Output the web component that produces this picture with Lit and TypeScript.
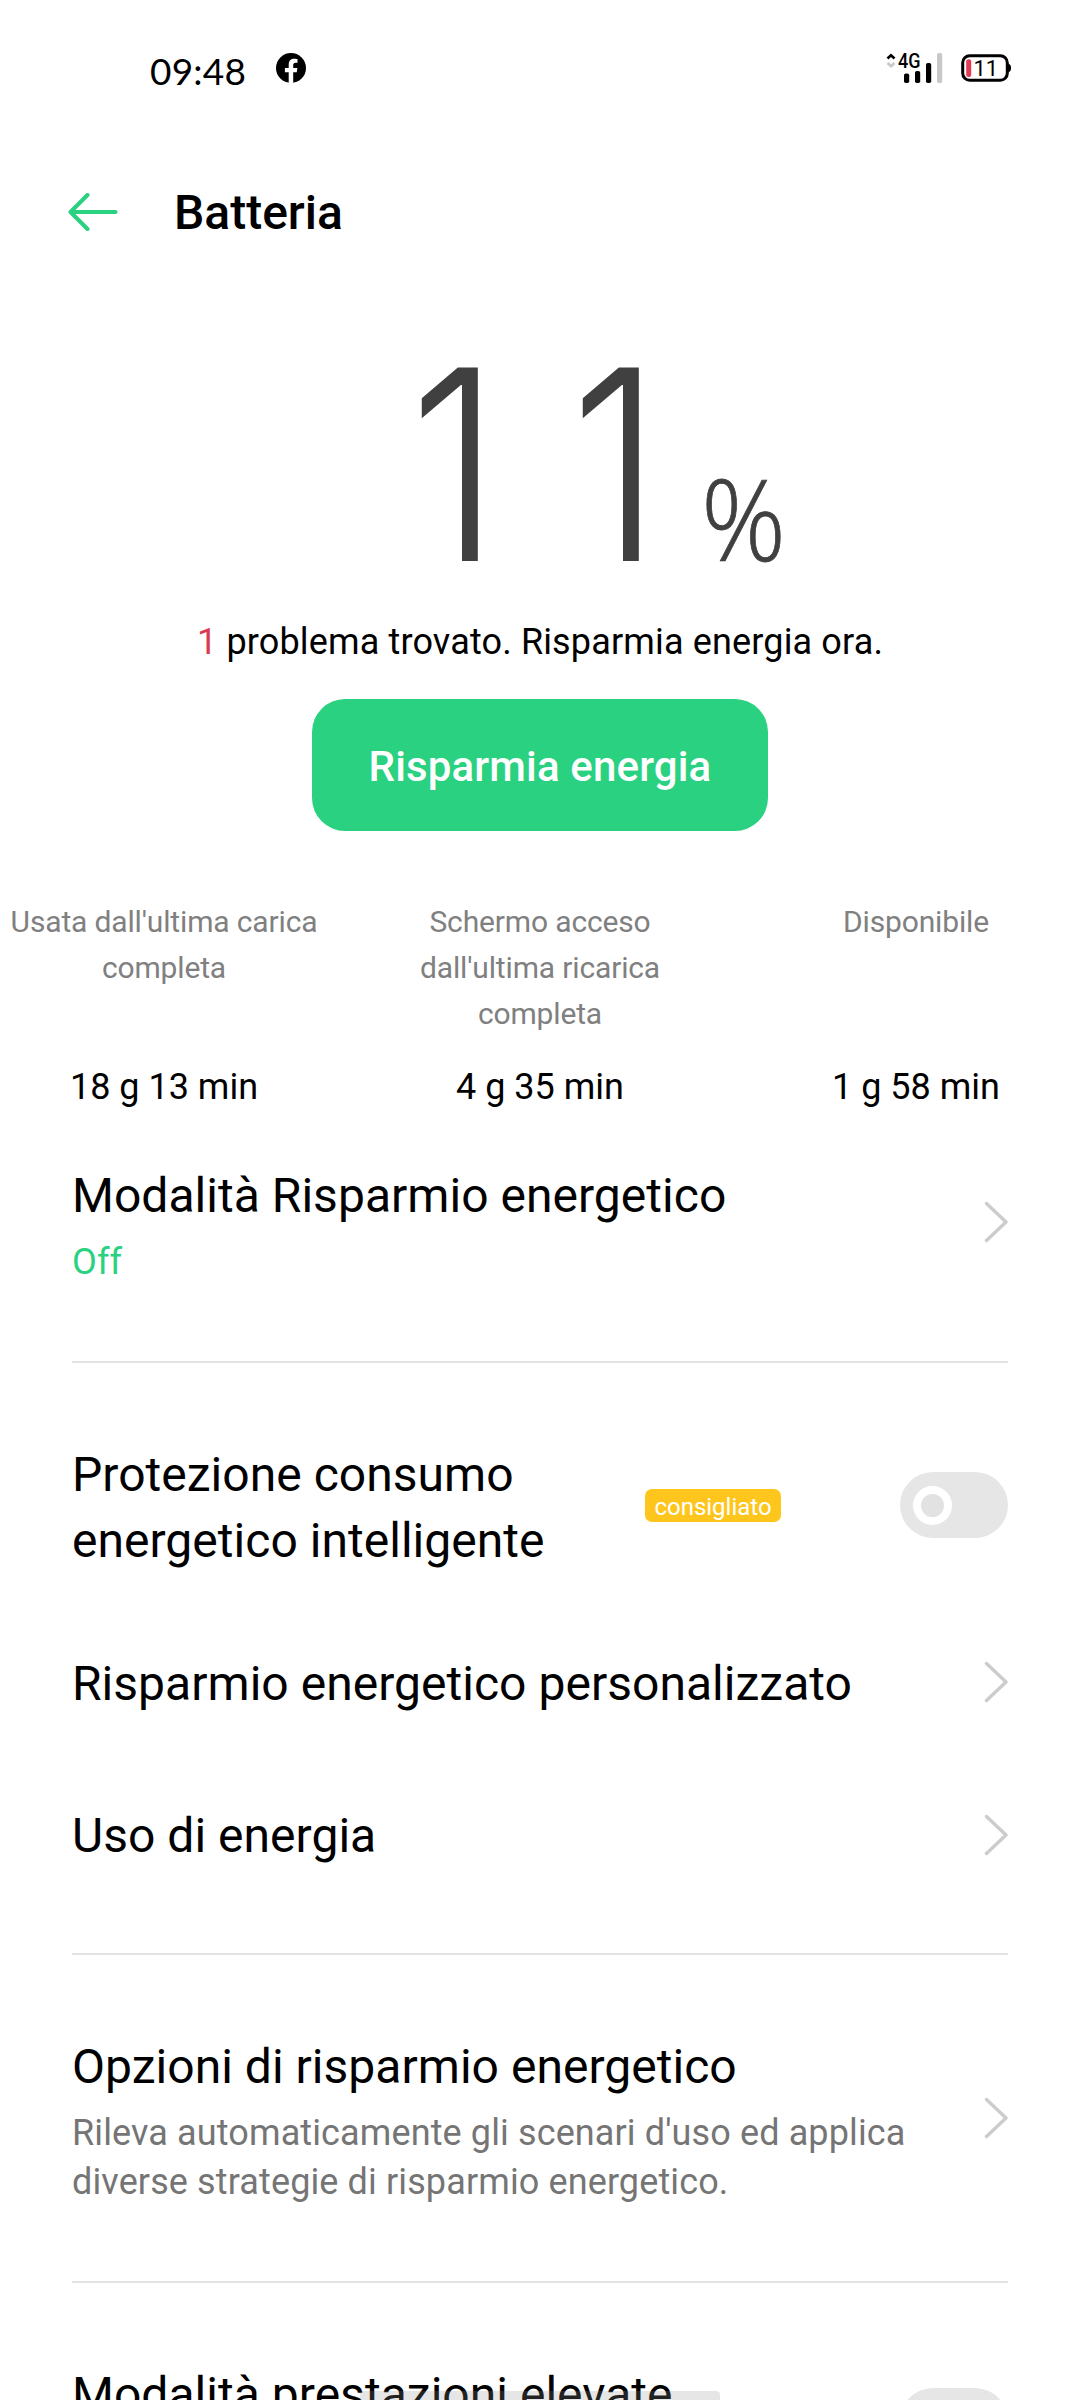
import { LitElement, html, css, svg } from "lit";
import { customElement, property } from "lit/decorators.js";

@customElement("row-chevron")
class RowChevron extends LitElement {
  static styles = css`
    :host { display: block; flex: none; width: 25px; height: 42px; }
    .icon { display: block; }
  `;
  render() {
    return html`<svg class="icon" width="25" height="42" viewBox="0 0 25 42" fill="none">
      <path d="M3.5 2.5L23 21L3.5 39.5" stroke="#cccccc" stroke-width="3.4" stroke-linecap="round" stroke-linejoin="round" />
    </svg>`;
  }
}

@customElement("toggle-switch")
class ToggleSwitch extends LitElement {
  static styles = css`
    :host { display: block; flex: none; }
    .track {
      box-sizing: border-box;
      display: flex;
      align-items: center;
      width: 108px;
      height: 66px;
      padding-left: 13px;
      border-radius: 33px;
      background: #e6e6e6;
    }
    .knob {
      box-sizing: border-box;
      width: 39px;
      height: 39px;
      border: 8px solid #ffffff;
      border-radius: 50%;
      background: #e2e2e2;
    }
  `;
  render() {
    return html`<div class="track"><div class="knob"></div></div>`;
  }
}

@customElement("status-bar")
class StatusBar extends LitElement {
  @property() time = "";
  @property() level = "";
  static styles = css`
    :host { display: block; }
    .bar {
      box-sizing: border-box;
      display: flex;
      align-items: center;
      height: 132px;
      padding: 4px 69px 0 150px;
    }
    .time { font: 400 37px/44px Lato, sans-serif; letter-spacing: 0.2px; color: #000; width: 126px; padding-top: 5px; }
    .fb { flex: none; margin-right: auto; }
    .fb, .signal, .battery { display: block; }
    .signal { margin-right: 18px; }
    .net { font: 500 20px Roboto, sans-serif; }
    .pct { font: 400 22px Roboto, sans-serif; }
  `;
  render() {
    const bars = [
      [18, 20.5, 9.5, "#000"],
      [29, 18, 12, "#000"],
      [40, 10, 20, "#000"],
      [51, 0, 30, "#c8c8c8"],
    ] as const;
    return html`<div class="bar">
      <span class="time">${this.time}</span>
      <svg class="fb" width="30" height="30" viewBox="0 0 30 30">
        <circle cx="15" cy="15" r="15" fill="#000" />
        <path fill="#fff" d="M12.7 30V19.2H8.9V14.9H12.7V11.6C12.7 7.8 14.9 5.8 18.3 5.8C19.9 5.8 21.5 6.1 21.5 6.1V9.7H19.7C17.8 9.7 17.2 10.8 17.2 12V14.9H21.4L20.7 19.2H17.2V30Z" />
      </svg>
      <svg class="signal" width="57" height="30" viewBox="0 0 57 30" overflow="visible">
        <path d="M1.5 5.5L5 2.3L8.5 5.5" fill="none" stroke="#000" stroke-width="2.6" />
        <path d="M1.5 10L5 13.2L8.5 10" fill="none" stroke="#c8c8c8" stroke-width="2.6" />
        <text class="net" x="12" y="14.5" textLength="22.5" lengthAdjust="spacingAndGlyphs">4G</text>
        ${bars.map(([x, y, h, c]) => svg`<rect x=${x} y=${y} width="5.2" height=${h} rx="1.8" fill=${c} />`)}
      </svg>
      <svg class="battery" width="50" height="30" viewBox="0 0 50 30">
        <rect x="1.7" y="2.7" width="44.6" height="24.6" rx="7" fill="none" stroke="#000" stroke-width="3" />
        <path d="M46.5 10.5C49.5 11 50 13 50 15C50 17 49.5 19 46.5 19.5Z" fill="#000" />
        <rect x="5.2" y="6.3" width="5" height="17.6" rx="2.2" fill="#e43a52" />
        <text class="pct" x="12.5" y="22.8">${this.level}</text>
      </svg>
    </div>`;
  }
}

@customElement("app-root")
class AppRoot extends LitElement {
  static styles = css`
    :host {
      display: block;
      position: relative;
      box-sizing: border-box;
      width: 1080px;
      height: 2400px;
      overflow: hidden;
      background: #fff;
      color: #000;
      font-family: Roboto, sans-serif;
    }
    .header { display: flex; align-items: center; height: 160px; padding-left: 68px; }
    .back { display: block; margin-right: 56px; }
    .heading { margin: 2px 0 0; font-size: 48px; line-height: 66px; font-weight: 500; }
    .level {
      display: flex;
      align-items: baseline;
      height: 220px;
      margin-top: 62px;
      padding-left: 409px;
      color: #404040;
    }
    .digits { display: grid; grid-template-columns: 161px 131px; font-family: Inter, sans-serif; font-weight: 300; font-size: 266px; line-height: 220px; }
    .digit { transform: scaleX(0.87); transform-origin: left; }
    .percent {
      font-family: "Open Sans", sans-serif;
      font-weight: 300;
      font-size: 112px;
      line-height: 150px;
      -webkit-text-stroke: 0.8px #404040;
      transform: scaleX(0.94);
      transform-origin: left;
    }
    .notice { margin: 44px 0 33px; text-align: center; font-size: 36px; line-height: 48px; letter-spacing: 0.15px; }
    .count { color: #d93a55; }
    .action {
      display: block;
      width: 456px;
      height: 132px;
      margin: 0 auto;
      padding: 4px 0 0;
      border: 0;
      border-radius: 33px;
      background: #2ad181;
      color: #fff;
      font: 500 42px/56px Roboto, sans-serif;
      letter-spacing: 0.15px;
    }
    .stats { display: grid; grid-template-columns: repeat(3, 376px); margin: 68px 0 0 -24px; }
    .stat { display: flex; flex-direction: column; align-items: center; text-align: center; }
    .label { height: 138px; font-size: 30px; line-height: 46px; letter-spacing: -0.15px; color: #808080; white-space: pre-line; }
    .value { margin-top: 26px; font-size: 36px; line-height: 48px; }
    .list { padding: 0 72px; }
    .row { display: flex; align-items: center; justify-content: space-between; }
    .text { display: flex; flex-direction: column; }
    .title { font-size: 48px; line-height: 66px; letter-spacing: 0.03px; white-space: pre-line; }
    .sub { margin-top: 9px; font-size: 36px; line-height: 49px; letter-spacing: 0.12px; color: #757575; white-space: pre-line; }
    .on { color: #2ad181; }
    .divider { height: 2px; background: #e3e3e3; }
    .mode { height: 128px; margin: 47px 0 75px; }
    .mode .text { padding-top: 6px; }
    .smart { height: 132px; margin: 76px 0 34px; }
    .smart .text { padding-top: 5px; width: 573px; }
    .badge {
      box-sizing: border-box;
      width: 136px;
      height: 33px;
      margin-right: auto;
      padding-top: 2px;
      border-radius: 7px;
      background: #fec61c;
      color: #fff;
      text-align: center;
      font-size: 24px;
      line-height: 32px;
    }
    .plain { height: 153px; }
    .plain .text { padding-top: 5px; }
    .usage .text { padding-top: 3px; }
    .usage { margin-bottom: 42px; }
    .options { height: 174px; margin: 76px 0; }
    .options .text { padding-top: 4px; }
    .perf { align-items: flex-start; padding-top: 79px; }
    .perf toggle-switch { margin-top: 26px; }
    .handle {
      position: absolute;
      left: 360px;
      top: 2391px;
      width: 360px;
      height: 12px;
      border-radius: 4px;
      background: rgba(147, 147, 147, 0.23);
    }
  `;

  private stats = [
    ["Usata dall'ultima carica\ncompleta", "18 g 13 min"],
    ["Schermo acceso\ndall'ultima ricarica\ncompleta", "4 g 35 min"],
    ["Disponibile", "1 g 58 min"],
  ];

  render() {
    return html`
      <status-bar time="09:48" level="11"></status-bar>
      <header class="header">
        <svg class="back" width="50" height="38" viewBox="0 0 50 38" fill="none" stroke="#2ad181" stroke-width="4" stroke-linecap="round" stroke-linejoin="round">
          <path d="M19.5 2L2.5 19L19.5 36M2.5 19H47.5" />
        </svg>
        <h1 class="heading">Batteria</h1>
      </header>
      <div class="level">
        <span class="digits">${[..."11"].map((d) => html`<span class="digit">${d}</span>`)}</span>
        <span class="percent">%</span>
      </div>
      <p class="notice"><span class="count">1</span> problema trovato. Risparmia energia ora.</p>
      <button class="action">Risparmia energia</button>
      <div class="stats">
        ${this.stats.map(([label, value]) => html`<div class="stat">
          <div class="label">${label}</div>
          <div class="value">${value}</div>
        </div>`)}
      </div>
      <main class="list">
        <div class="row mode">
          <div class="text"><span class="title">Modalità Risparmio energetico</span><span class="sub on">Off</span></div>
          <row-chevron></row-chevron>
        </div>
        <div class="divider"></div>
        <div class="row smart">
          <div class="text"><span class="title">${"Protezione consumo\nenergetico intelligente"}</span></div>
          <span class="badge">consigliato</span>
          <toggle-switch></toggle-switch>
        </div>
        <div class="row plain">
          <div class="text"><span class="title">Risparmio energetico personalizzato</span></div>
          <row-chevron></row-chevron>
        </div>
        <div class="row plain usage">
          <div class="text"><span class="title">Uso di energia</span></div>
          <row-chevron></row-chevron>
        </div>
        <div class="divider"></div>
        <div class="row options">
          <div class="text">
            <span class="title">Opzioni di risparmio energetico</span>
            <span class="sub">${"Rileva automaticamente gli scenari d'uso ed applica\ndiverse strategie di risparmio energetico."}</span>
          </div>
          <row-chevron></row-chevron>
        </div>
        <div class="divider"></div>
        <div class="row perf">
          <span class="title">Modalità prestazioni elevate</span>
          <toggle-switch></toggle-switch>
        </div>
      </main>
      <div class="handle"></div>
    `;
  }
}
